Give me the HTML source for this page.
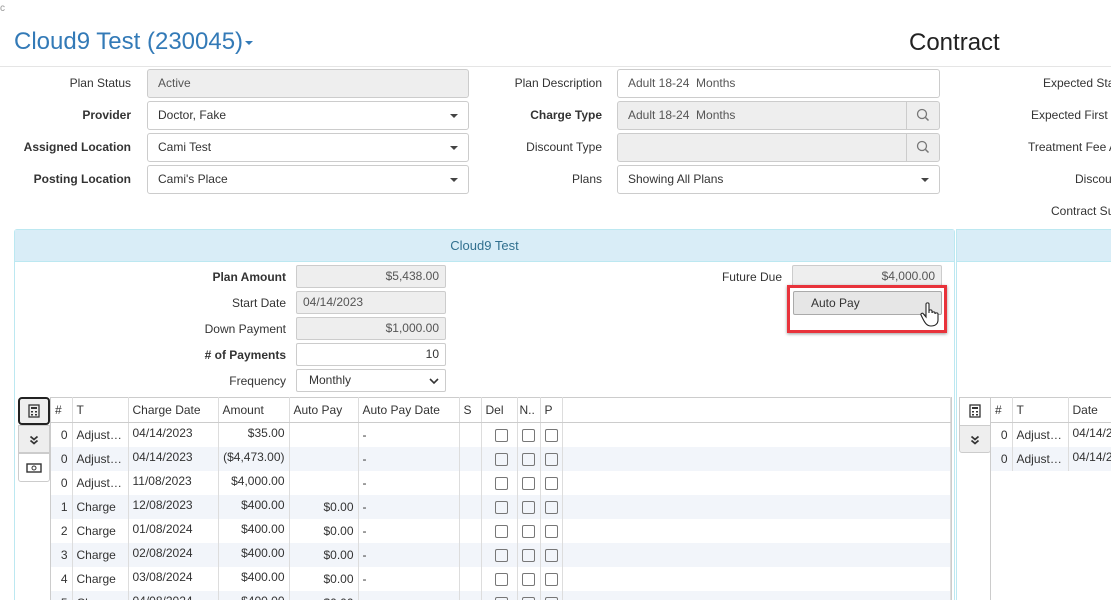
<!DOCTYPE html>
<html style="width:1111px;height:600px;overflow:hidden"><head><meta charset="utf-8"><style>
*{box-sizing:border-box;margin:0;padding:0}
body{width:1111px;height:600px;overflow:hidden;background:#fff;font-family:"Liberation Sans",Arial,sans-serif;font-size:12px;color:#333;position:relative}
.a{position:absolute}
.lbl{position:absolute;text-align:right;white-space:nowrap}
.b{font-weight:bold}
.in{position:absolute;border:1px solid #ccc;border-radius:3px;background:#fff;padding:0 10px;line-height:27px;white-space:nowrap;overflow:hidden}
.ro{background:#eee}
.caret{position:absolute;right:10px;top:12px;width:0;height:0;border-left:4px solid transparent;border-right:4px solid transparent;border-top:4px solid #444}
.srch{position:absolute;right:0;top:0;width:33px;height:100%;border-left:1px solid #ccc}
.sm{position:absolute;border:1px solid #ccc;border-radius:2px;background:#eee;padding:0 6px;line-height:20px;white-space:nowrap}
table{border-collapse:collapse;position:absolute;table-layout:fixed}
td,th{height:24px;border-right:1px solid #ddd;white-space:nowrap;overflow:hidden;padding:0 4px;font-weight:normal}
th{text-align:left;border-bottom:1px solid #ccc;border-top:1px solid #ccc;height:25px}
tr.s td{background:#f2f5fa}
td.r{text-align:right}
td.c{text-align:center;padding:0}
.cb{display:inline-block;width:13px;height:13px;border:1px solid #777;border-radius:2px;vertical-align:middle}
.tab{position:absolute;width:32px;border:1px solid #ccc;background:#eee;text-align:center}
</style></head><body>
<div class="a" style="left:0;top:3px;font-size:10px;color:#999">c</div>
<div class="a" style="left:14px;top:28px;font-size:24px;color:#337ab7;white-space:nowrap">Cloud9 Test (230045)<span style="display:inline-block;width:0;height:0;border-left:4px solid transparent;border-right:4px solid transparent;border-top:4px solid #337ab7;vertical-align:middle;margin-left:2px"></span></div>
<div class="a" style="left:909px;top:29px;font-size:24px;color:#222">Contract</div>
<div class="a" style="left:0;top:66px;width:1111px;height:1px;background:#e5e5e5"></div>

<div class="lbl" style="right:980px;top:76px">Plan Status</div>
<div class="lbl b" style="right:980px;top:108px">Provider</div>
<div class="lbl b" style="right:980px;top:140px">Assigned Location</div>
<div class="lbl b" style="right:980px;top:172px">Posting Location</div>
<div class="in ro" style="left:147px;top:69px;width:322px;height:29px;color:#555">Active</div>
<div class="in" style="left:147px;top:101px;width:322px;height:29px">Doctor, Fake<span class="caret"></span></div>
<div class="in" style="left:147px;top:133px;width:322px;height:29px">Cami Test<span class="caret"></span></div>
<div class="in" style="left:147px;top:165px;width:322px;height:29px">Cami's Place<span class="caret"></span></div>

<div class="lbl" style="right:509px;top:76px">Plan Description</div>
<div class="lbl b" style="right:509px;top:108px">Charge Type</div>
<div class="lbl" style="right:509px;top:140px">Discount Type</div>
<div class="lbl" style="right:509px;top:172px">Plans</div>
<div class="in" style="left:617px;top:69px;width:323px;height:29px;color:#555">Adult 18-24&nbsp; Months</div>
<div class="in ro" style="left:617px;top:101px;width:323px;height:29px;color:#555">Adult 18-24&nbsp; Months<span class="srch"><svg width="33" height="27"><circle cx="15" cy="12" r="4.5" fill="none" stroke="#777" stroke-width="1.3"/><line x1="18.5" y1="15.5" x2="21.5" y2="18.5" stroke="#777" stroke-width="1.5"/></svg></span></div>
<div class="in ro" style="left:617px;top:133px;width:323px;height:29px"><span class="srch"><svg width="33" height="27"><circle cx="15" cy="12" r="4.5" fill="none" stroke="#777" stroke-width="1.3"/><line x1="18.5" y1="15.5" x2="21.5" y2="18.5" stroke="#777" stroke-width="1.5"/></svg></span></div>
<div class="in" style="left:617px;top:165px;width:323px;height:29px">Showing All Plans<span class="caret"></span></div>

<div class="lbl" style="left:1043px;top:76px">Expected Sta</div>
<div class="lbl" style="left:1031px;top:108px">Expected First</div>
<div class="lbl" style="left:1028px;top:140px">Treatment Fee A</div>
<div class="lbl" style="left:1075px;top:172px">Discou</div>
<div class="lbl" style="left:1051px;top:204px">Contract Su</div>

<div class="a" style="left:14px;top:229px;width:941px;height:380px;border:1px solid #bce8f1;border-radius:3px"></div>
<div class="a" style="left:15px;top:230px;width:939px;height:32px;background:#d9edf7;border-bottom:1px solid #bce8f1;text-align:center;line-height:31px;color:#31708f;font-size:13px">Cloud9 Test</div>
<div class="a" style="left:956px;top:229px;width:160px;height:380px;border:1px solid #bce8f1"></div>
<div class="a" style="left:957px;top:230px;width:160px;height:32px;background:#d9edf7;border-bottom:1px solid #bce8f1"></div>

<div class="lbl b" style="right:825px;top:270px">Plan Amount</div>
<div class="lbl" style="right:825px;top:296px">Start Date</div>
<div class="lbl" style="right:825px;top:322px">Down Payment</div>
<div class="lbl b" style="right:825px;top:348px"># of Payments</div>
<div class="lbl" style="right:825px;top:374px">Frequency</div>
<div class="sm" style="left:296px;top:265px;width:150px;height:23px;text-align:right;color:#555">$5,438.00</div>
<div class="sm" style="left:296px;top:291px;width:150px;height:23px;color:#555">04/14/2023</div>
<div class="sm" style="left:296px;top:317px;width:150px;height:23px;text-align:right;color:#555">$1,000.00</div>
<div class="sm" style="left:296px;top:343px;width:150px;height:23px;text-align:right;background:#fff">10</div>
<div class="sm" style="left:296px;top:369px;width:150px;height:23px;background:#fff;padding-left:12px">Monthly<svg class="a" style="right:6px;top:7px" width="10" height="8"><path d="M1 2 L5 6 L9 2" fill="none" stroke="#333" stroke-width="1.6"/></svg></div>

<div class="lbl" style="right:329px;top:270px">Future Due</div>
<div class="sm" style="left:792px;top:265px;width:150px;height:23px;text-align:right;color:#555">$4,000.00</div>
<div class="a" style="left:787px;top:285px;width:160px;height:48px;border:3px solid #e8333b;box-shadow:0 1px 3px rgba(0,0,0,.4)"></div>
<div class="sm" style="left:793px;top:291px;width:149px;height:24px;padding-left:17px;line-height:22px;background:#e6e6e6;border-color:#aaa">Auto Pay</div>
<svg class="a" style="left:920px;top:302px" width="22" height="26" viewBox="0 0 22 26"><path d="M6 2 C6 0.5 9 0.5 9 2 L9 11 L9 9 C9 7.5 12 7.5 12 9 L12 11 C12 9.5 15 9.5 15 11 L15 12 C15 10.5 18 10.5 18 12 L18 18 C18 22 15 24 11 24 C7 24 5 21 3 17 L1 13 C0.5 11.5 2.5 10.5 3.5 12 L6 15 Z" fill="#fff" stroke="#222" stroke-width="1.1"/></svg>

<div class="tab" style="left:18px;top:397px;height:28px;background:#eee;border:2px solid #222;border-radius:4px"><svg width="12" height="14" style="margin-top:5px"><rect x="1" y="1" width="10" height="12" fill="none" stroke="#333" stroke-width="1.3"/><rect x="3" y="3" width="6" height="2" fill="#333"/><rect x="3" y="7" width="2" height="1.5" fill="#333"/><rect x="7" y="7" width="2" height="1.5" fill="#333"/><rect x="3" y="10" width="2" height="1.5" fill="#333"/><rect x="7" y="10" width="2" height="1.5" fill="#333"/></svg></div>
<div class="tab" style="left:18px;top:425px;height:28px"><svg width="10" height="10" style="margin-top:9px"><path d="M1.5 1.5 L5 4.5 L8.5 1.5 M1.5 5.5 L5 8.5 L8.5 5.5" fill="none" stroke="#333" stroke-width="1.8"/></svg></div>
<div class="tab" style="left:18px;top:453px;height:29px;background:#fff;border-radius:0 0 3px 3px"><svg width="16" height="10" style="margin-top:9px"><rect x="1" y="1" width="14" height="8" fill="none" stroke="#333" stroke-width="1.4"/><circle cx="8" cy="5" r="2" fill="none" stroke="#333"/></svg></div>
<div class="a" style="left:50px;top:397px;width:1px;height:210px;background:#ccc"></div>
<div class="a" style="left:951px;top:397px;width:1px;height:210px;background:#ccc"></div>

<table style="left:51px;top:397px;width:900px">
<colgroup><col style="width:21px"><col style="width:56px"><col style="width:90px"><col style="width:71px"><col style="width:69px"><col style="width:101px"><col style="width:22px"><col style="width:36px"><col style="width:23px"><col style="width:22px"><col></colgroup>
<tr><th>#</th><th>T</th><th>Charge Date</th><th>Amount</th><th>Auto Pay</th><th>Auto Pay Date</th><th>S</th><th>Del</th><th style="padding:0 2px">N..</th><th>P</th><th></th></tr>
<tr><td class="r">0</td><td>Adjust…</td><td style="vertical-align:top;padding-top:3px">04/14/2023</td><td class="r" style="vertical-align:top;padding-top:3px">$35.00</td><td></td><td>-</td><td></td><td class="r" style="padding-right:9px"><span class="cb"></span></td><td class="c"><span class="cb"></span></td><td class="c"><span class="cb"></span></td><td></td></tr>
<tr class="s"><td class="r">0</td><td>Adjust…</td><td style="vertical-align:top;padding-top:3px">04/14/2023</td><td class="r" style="vertical-align:top;padding-top:3px">($4,473.00)</td><td></td><td>-</td><td></td><td class="r" style="padding-right:9px"><span class="cb"></span></td><td class="c"><span class="cb"></span></td><td class="c"><span class="cb"></span></td><td></td></tr>
<tr><td class="r">0</td><td>Adjust…</td><td style="vertical-align:top;padding-top:3px">11/08/2023</td><td class="r" style="vertical-align:top;padding-top:3px">$4,000.00</td><td></td><td>-</td><td></td><td class="r" style="padding-right:9px"><span class="cb"></span></td><td class="c"><span class="cb"></span></td><td class="c"><span class="cb"></span></td><td></td></tr>
<tr class="s"><td class="r">1</td><td>Charge</td><td style="vertical-align:top;padding-top:3px">12/08/2023</td><td class="r" style="vertical-align:top;padding-top:3px">$400.00</td><td class="r">$0.00</td><td>-</td><td></td><td class="r" style="padding-right:9px"><span class="cb"></span></td><td class="c"><span class="cb"></span></td><td class="c"><span class="cb"></span></td><td></td></tr>
<tr><td class="r">2</td><td>Charge</td><td style="vertical-align:top;padding-top:3px">01/08/2024</td><td class="r" style="vertical-align:top;padding-top:3px">$400.00</td><td class="r">$0.00</td><td>-</td><td></td><td class="r" style="padding-right:9px"><span class="cb"></span></td><td class="c"><span class="cb"></span></td><td class="c"><span class="cb"></span></td><td></td></tr>
<tr class="s"><td class="r">3</td><td>Charge</td><td style="vertical-align:top;padding-top:3px">02/08/2024</td><td class="r" style="vertical-align:top;padding-top:3px">$400.00</td><td class="r">$0.00</td><td>-</td><td></td><td class="r" style="padding-right:9px"><span class="cb"></span></td><td class="c"><span class="cb"></span></td><td class="c"><span class="cb"></span></td><td></td></tr>
<tr><td class="r">4</td><td>Charge</td><td style="vertical-align:top;padding-top:3px">03/08/2024</td><td class="r" style="vertical-align:top;padding-top:3px">$400.00</td><td class="r">$0.00</td><td>-</td><td></td><td class="r" style="padding-right:9px"><span class="cb"></span></td><td class="c"><span class="cb"></span></td><td class="c"><span class="cb"></span></td><td></td></tr>
<tr class="s"><td class="r">5</td><td>Charge</td><td style="vertical-align:top;padding-top:3px">04/08/2024</td><td class="r" style="vertical-align:top;padding-top:3px">$400.00</td><td class="r">$0.00</td><td>-</td><td></td><td class="r" style="padding-right:9px"><span class="cb"></span></td><td class="c"><span class="cb"></span></td><td class="c"><span class="cb"></span></td><td></td></tr>
</table>

<div class="tab" style="left:959px;top:397px;height:28px;background:#fff;border-bottom:none"><svg width="12" height="14" style="margin-top:6px"><rect x="1" y="1" width="10" height="12" fill="none" stroke="#333" stroke-width="1.3"/><rect x="3" y="3" width="6" height="2" fill="#333"/><rect x="3" y="7" width="2" height="1.5" fill="#333"/><rect x="7" y="7" width="2" height="1.5" fill="#333"/><rect x="3" y="10" width="2" height="1.5" fill="#333"/><rect x="7" y="10" width="2" height="1.5" fill="#333"/></svg></div>
<div class="tab" style="left:959px;top:425px;height:28px;border-radius:0 0 3px 3px"><svg width="10" height="10" style="margin-top:9px"><path d="M1.5 1.5 L5 4.5 L8.5 1.5 M1.5 5.5 L5 8.5 L8.5 5.5" fill="none" stroke="#333" stroke-width="1.8"/></svg></div>
<div class="a" style="left:990px;top:397px;width:1px;height:210px;background:#ccc"></div>
<table style="left:991px;top:397px;width:130px">
<colgroup><col style="width:21px"><col style="width:56px"><col></colgroup>
<tr><th>#</th><th>T</th><th>Date</th></tr>
<tr><td class="r">0</td><td>Adjust…</td><td style="vertical-align:top;padding-top:3px">04/14/2023</td></tr>
<tr class="s"><td class="r">0</td><td>Adjust…</td><td style="vertical-align:top;padding-top:3px">04/14/2023</td></tr>
</table>
</body></html>
